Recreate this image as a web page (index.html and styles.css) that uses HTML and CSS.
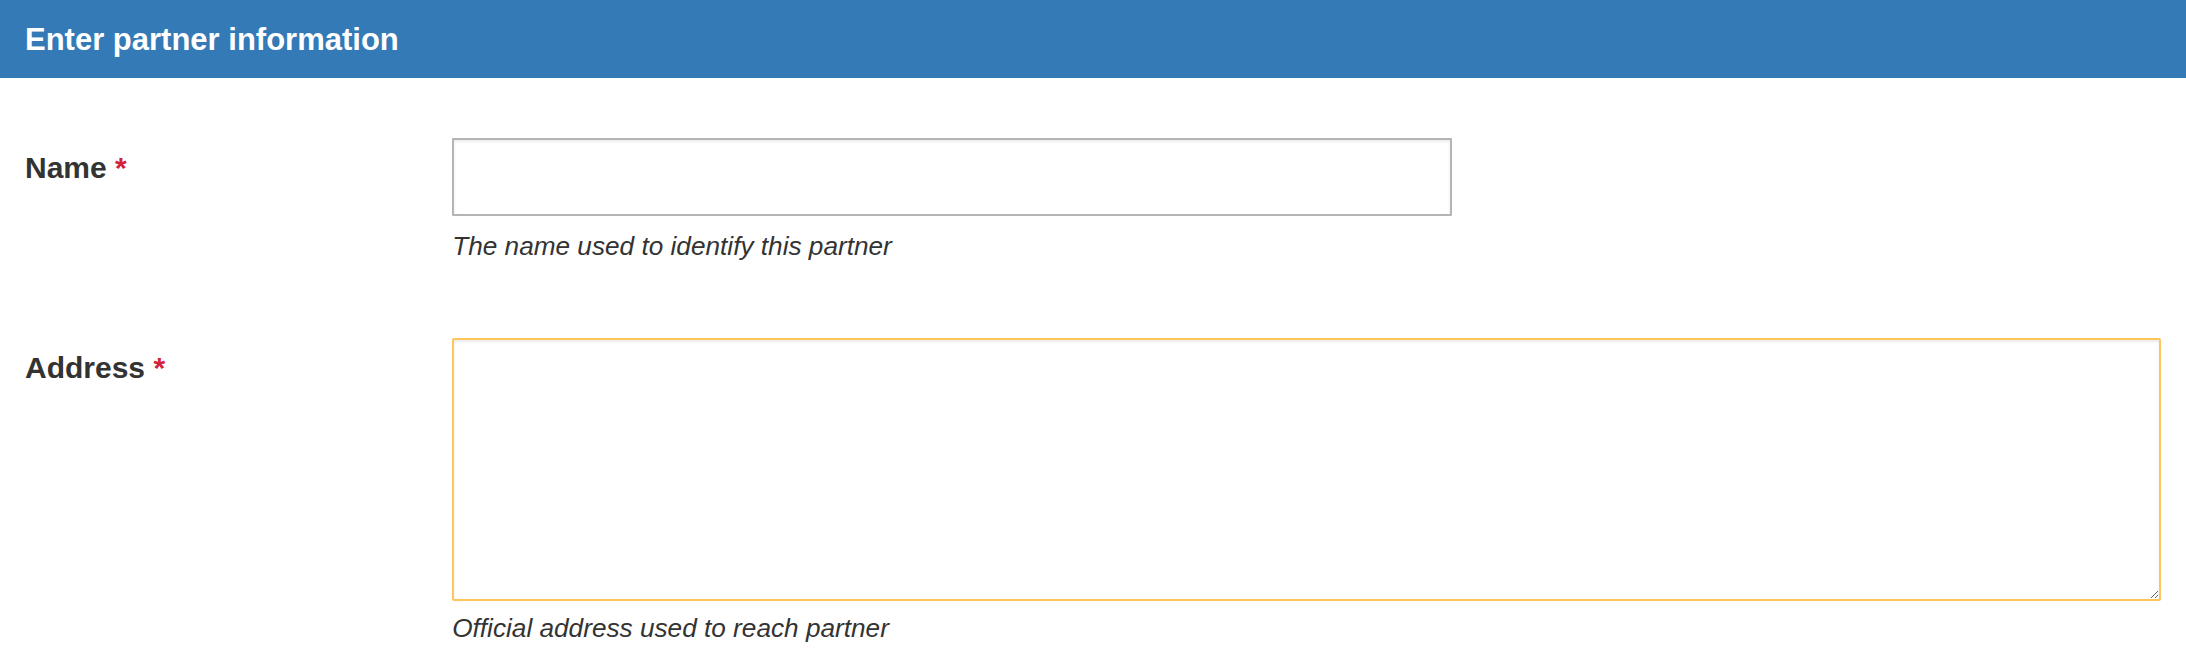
FILE: index.html
```html
<!DOCTYPE html>
<html lang="en">
<head>
<meta charset="utf-8">
<title>Enter partner information</title>
<link rel="stylesheet" href="styles.css">
</head>
<body>
<div class="panel">
  <div class="panel-heading">Enter partner information</div>
  <form class="panel-body">
    <div class="form-group">
      <label class="control-label" for="name">Name <span class="req">*</span></label>
      <div class="control">
        <input id="name" class="form-control name-input" type="text">
        <p class="help-block">The name used to identify this partner</p>
      </div>
    </div>
    <div class="form-group">
      <label class="control-label" for="address">Address <span class="req">*</span></label>
      <div class="control">
        <textarea id="address" class="form-control address-input"></textarea>
        <p class="help-block help-tight">Official address used to reach partner</p>
      </div>
    </div>
  </form>
</div>
</body>
</html>
```

FILE: styles.css
```css
html, body {
  margin: 0;
  padding: 0;
  background: #ffffff;
}

body {
  font-family: "Liberation Sans", Arial, Helvetica, sans-serif;
  color: #333333;
  overflow: hidden;
}

.panel-heading {
  height: 78px;
  box-sizing: border-box;
  padding: 0 25px;
  background: #337ab7;
  color: #ffffff;
  font-size: 31px;
  font-weight: bold;
  line-height: 80px;
}

.panel-body {
  padding: 60px 25px 0;
}

.form-group {
  display: grid;
  grid-template-columns: 1fr 4fr;
  margin-bottom: 73px;
}

.form-group:last-child {
  margin-bottom: 0;
}

.control-label {
  padding-top: 8px;
  font-size: 30px;
  font-weight: bold;
  line-height: 43px;
  color: #333333;
}

.req {
  color: #d2233c;
}

.form-control {
  display: block;
  box-sizing: border-box;
  margin: 0;
  background: #ffffff;
  border-radius: 1px;
  box-shadow: inset 0 2px 3px rgba(0, 0, 0, 0.08);
  font-family: "Liberation Sans", Arial, sans-serif;
  font-size: 26px;
  outline: none;
}

.name-input {
  width: 1000px;
  height: 78px;
  border: 2px solid #b5b5b5;
}

.address-input {
  width: 100%;
  height: 263px;
  border: 2px solid #fdc55c;
  border-radius: 2px;
  resize: vertical;
}

.help-block {
  margin: 12px 0 0;
  font-size: 26.2px;
  font-style: italic;
  line-height: 37px;
  color: #333333;
}

.help-tight {
  margin-top: 9px;
}
```
